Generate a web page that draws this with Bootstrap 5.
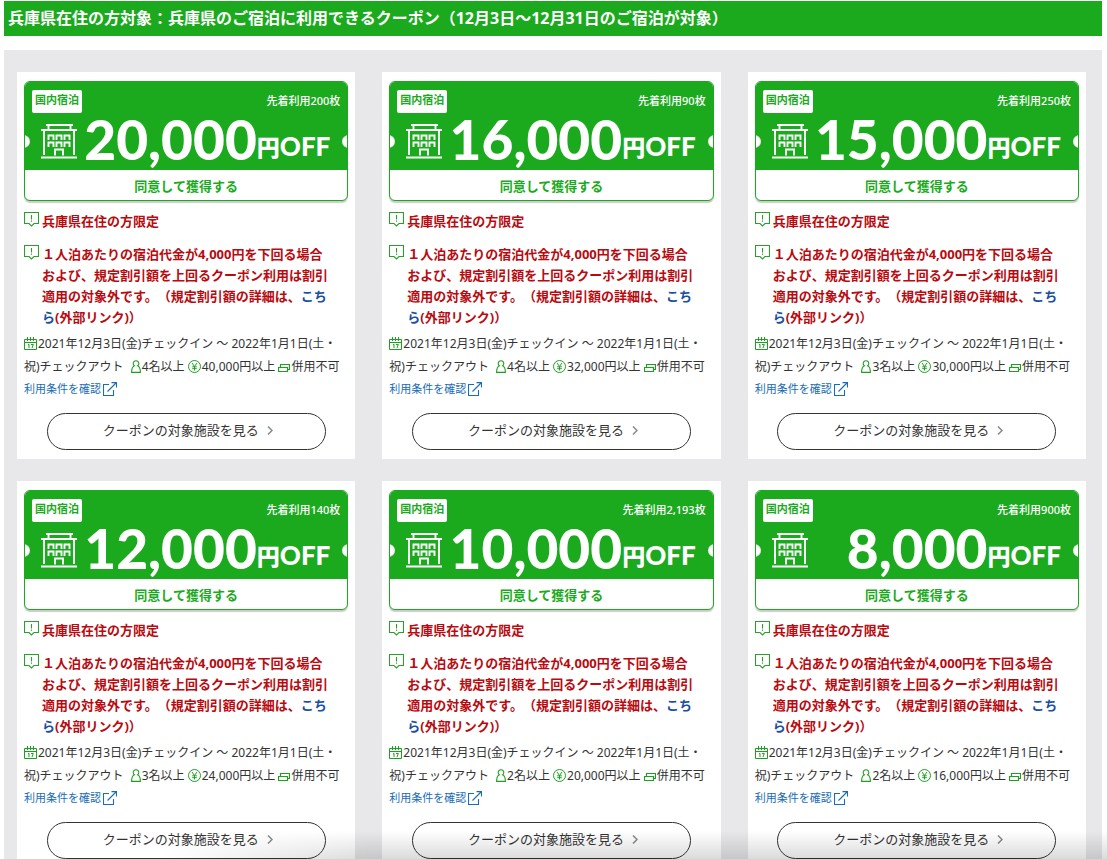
<!DOCTYPE html>
<html lang="ja">
<head>
<meta charset="utf-8">
<meta name="viewport" content="width=device-width, initial-scale=1">
<title>兵庫県 宿泊クーポン</title>
<link href="https://cdn.jsdelivr.net/npm/bootstrap@5.3.0/dist/css/bootstrap.min.css" rel="stylesheet">
<style>
  :root { --brand: #1baa1e; }
  body { font-family: "Noto Sans", "Noto Sans CJK JP", sans-serif; font-size: 12px; line-height: 23px; color: #333; text-spacing-trim: space-all; padding: 1px 5px 0 4px; }
  .page-title { background: var(--brand); font-size: 16px; line-height: 35px; margin-bottom: 14px; padding-left: 4px; }
  .coupon-area { background: #e8e8ea; padding: 22px 16px 22px 13px; }
  .coupon-grid { grid-template-columns: repeat(auto-fit, minmax(320px, 1fr)); gap: 22px 27px; }
  .coupon { padding: 9px 7px; }
  .ticket { height: 120px; border: 1px solid var(--brand); border-radius: 6px; box-shadow: 0 2px 1px #ccc; overflow: hidden; }
  .ticket-face { height: 88px; background: var(--brand); padding: 8px 7px 0; }
  .ticket-face::before, .ticket-face::after { content: ""; position: absolute; top: 53px; width: 13px; height: 13px; border-radius: 50%; background: #fff; box-shadow: inset 0 0 2px #bbb; }
  .ticket-face::before { left: -8px; }
  .ticket-face::after { right: -8px; }
  .kind { background: #fff; color: var(--brand); font-size: 11px; line-height: 20px; height: 23px; padding: 0 3px; border-radius: 2px; }
  .stock { font-size: 11px; line-height: 22px; font-weight: 500; }
  .price-row { padding: 0 10px 0 9px; height: 56px; }
  .amount { font-family: Lato, sans-serif; font-weight: 900; font-size: 55px; line-height: 52px; padding-bottom: 4px; }
  .unit { font-family: Lato, "Noto Sans CJK JP", sans-serif; font-weight: 900; font-size: 26px; line-height: 24px; padding-bottom: 10px; }
  .unit-yen { font-size: 23px; }
  .get-btn { color: var(--brand); font-size: 13px; height: 30px; line-height: 32px; }
  .notes { margin: 10px 0 4px; color: #b90a10; font-size: 13px; line-height: 21px; font-weight: 700; }
  .notes li { padding-right: 16px; }
  .notes li + li { margin-top: 12px; }
  .notes svg { margin: 1px 3px 0 0; }
  .notes a { color: #1b4fa0; text-decoration: none; }
  .terms { color: #1a6db5; font-size: 11px; line-height: 22px; padding-bottom: 1px; gap: 2px; text-decoration: none; }
  .meta svg { vertical-align: -2px; margin-right: 1px; }
  .facility-btn { width: 279px; height: 37px; border: 1px solid #333; border-radius: 19px; font-size: 13px; line-height: 20px; color: #333; margin-top: 12px; background: #fff; padding: 0 0 3px 3px; }
  .bottom-shade { height: 28px; pointer-events: none; background: linear-gradient(to bottom, rgba(0,0,0,0), rgba(0,0,0,.14)); -webkit-mask-image: linear-gradient(to right, transparent 160px, #000 370px); mask-image: linear-gradient(to right, transparent 160px, #000 370px); }
</style>
</head>
<body>
<svg class="d-none" xmlns="http://www.w3.org/2000/svg">
  <symbol id="i-hotel" viewBox="0 0 36 35"><g fill="none" stroke="#fff" stroke-width="1.900"><path d="M5 1h27M7.500 1v5M29.500 1v5M0 6h36M3 6v25M33 6v25M0 33.500h36"/><path d="M7.500 16v-4.500h5V16M15.500 16v-4.500h5V16M23.500 16v-4.500h5V16M7.500 23v-4.500h5V23M15.500 23v-4.500h5V23M23.500 23v-4.500h5V23M14 31.500v-6h8v6"/></g></symbol>
  <symbol id="i-note" viewBox="0 0 15 15"><path d="M.5.5h14v11H10L7.500 14 5 11.500H.5zM7.500 3v4.500M7.500 8.500v1.300" fill="none" stroke="#2a9f2c" stroke-width="1.100"/></symbol>
  <symbol id="i-cal" viewBox="0 0 13 13"><path d="M.5 2.500h12v10H.5zM.5 5.500h12M3.500 0v4M6.500 0v4M9.500 0v4M4 8l1-.7V11M7 7.500h2.300L8 11" fill="none" stroke="#1f9f22"/></symbol>
  <symbol id="i-person" viewBox="0 0 10 13"><path d="M3.400 5.800a2.800 2.800 0 1 1 3.200 0C8.700 6.800 9.400 9 9.400 12.400H.6C.6 9 1.300 6.800 3.400 5.800z" fill="none" stroke="#1f9f22" stroke-width="1.100"/></symbol>
  <symbol id="i-yen" viewBox="0 0 13 13"><g fill="none" stroke="#1f9f22"><circle cx="6.500" cy="6.500" r="6"/><path d="M4 3l2.500 3.500L9 3M6.500 6.500V10.500M4.200 6.800h4.600M4.200 8.700h4.600"/></g></symbol>
  <symbol id="i-ticket" viewBox="0 0 12 13"><path d="M2.500 7.500V4.500h9v5H9.500M.5 7.500h9v4h-9z" fill="none" stroke="#1f9f22" stroke-width="1.200"/></symbol>
  <symbol id="i-ext" viewBox="0 0 14 14"><path d="M6 2.500H.5v11h10V8M4.500 9.500L13 1M8.500.6h5v5" fill="none" stroke="#1a6db5" stroke-width="1.100"/></symbol>
  <symbol id="i-chev" viewBox="0 0 6 9"><path d="M1 .5l4 4-4 4" fill="none" stroke="#888" stroke-width="1.500"/></symbol>
</svg>
<h1 class="page-title text-white fw-bold">兵庫県在住の方対象：兵庫県のご宿泊に利用できるクーポン（12月3日〜12月31日のご宿泊が対象）</h1>
<main class="coupon-area"><div class="coupon-grid d-grid" id="coupons"></div></main>
<div class="bottom-shade fixed-bottom"></div>
<script>
  const icon = (id, w, h, cls = '') => `<svg class="${cls}" width="${w}" height="${h}" aria-hidden="true"><use href="#${id}"/></svg>`;
  const coupons = [
    ['20,000', '200', 4, '40,000'], ['16,000', '90', 4, '32,000'], ['15,000', '250', 3, '30,000'],
    ['12,000', '140', 3, '24,000'], ['10,000', '2,193', 2, '20,000'], ['8,000', '900', 2, '16,000']
  ];
  document.getElementById('coupons').innerHTML = coupons.map(([amount, stock, people, min]) => `
    <article class="coupon bg-white">
      <div class="ticket bg-white">
        <div class="ticket-face position-relative text-white">
          <div class="d-flex justify-content-between"><span class="kind fw-bold">国内宿泊</span><span class="stock">先着利用${stock}枚</span></div>
          <div class="price-row d-flex align-items-center justify-content-between">
            ${icon('i-hotel', 36, 35, 'flex-shrink-0')}
            <div class="d-flex align-items-end text-nowrap"><span class="amount">${amount}</span><span class="unit"><span class="unit-yen">円</span>OFF</span></div>
          </div>
        </div>
        <button type="button" class="get-btn btn border-0 rounded-0 p-0 w-100 fw-bold d-block">同意して獲得する</button>
      </div>
      <ul class="notes list-unstyled">
        <li class="d-flex">${icon('i-note', 15, 15, 'flex-shrink-0')}<span>兵庫県在住の方限定</span></li>
        <li class="d-flex">${icon('i-note', 15, 15, 'flex-shrink-0')}<span>１人泊あたりの宿泊代金が4,000円を下回る場合および、規定割引額を上回るクーポン利用は割引適用の対象外です。（規定割引額の詳細は、<a href="#">こちら</a>(外部リンク)）</span></li>
      </ul>
      <div class="meta">
        ${icon('i-cal', 13, 13)}<span>2021年12月3日(金)チェックイン 〜 2022年1月1日(土・</span><span>祝)チェックアウト</span>
        <span class="text-nowrap ms-1">${icon('i-person', 10, 13)}${people}名以上</span>
        <span class="text-nowrap">${icon('i-yen', 13, 13)}${min}円以上</span>
        <span class="text-nowrap">${icon('i-ticket', 12, 13)}併用不可</span>
      </div>
      <a class="terms d-flex align-items-center" href="#">利用条件を確認${icon('i-ext', 14, 14)}</a>
      <button type="button" class="facility-btn btn d-flex align-items-center justify-content-center gap-2 mx-auto">クーポンの対象施設を見る${icon('i-chev', 6, 9)}</button>
    </article>`).join('');
</script>
<script src="https://cdn.jsdelivr.net/npm/bootstrap@5.3.0/dist/js/bootstrap.bundle.min.js"></script>
</body>
</html>
